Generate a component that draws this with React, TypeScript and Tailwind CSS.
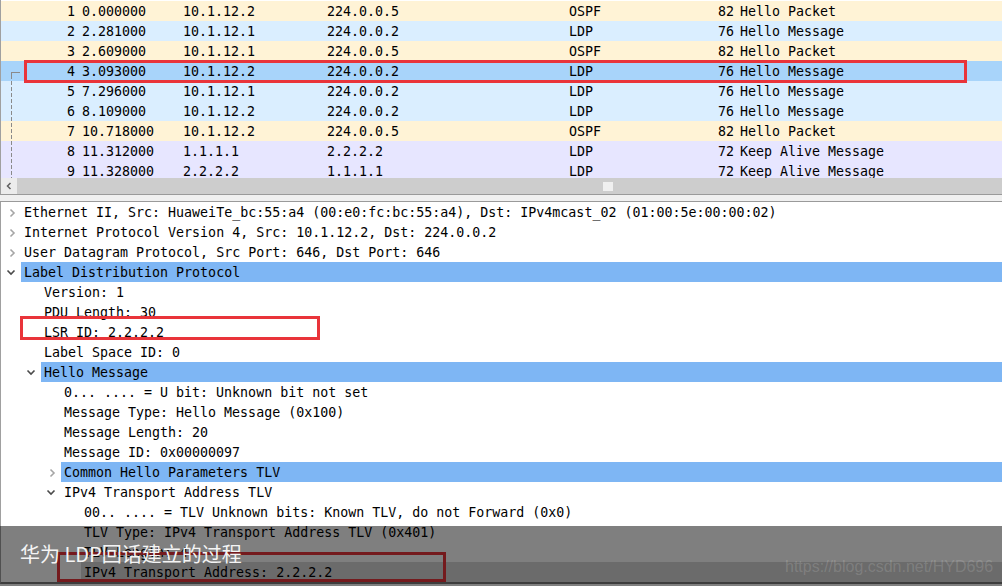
import React from "react";

type Packet = {
  no: number;
  time: string;
  src: string;
  dst: string;
  proto: string;
  len: number;
  info: string;
  bg: string;
};

const packets: Packet[] = [
  { no: 1, time: "0.000000", src: "10.1.12.2", dst: "224.0.0.5", proto: "OSPF", len: 82, info: "Hello Packet", bg: "bg-[#fff3d6]" },
  { no: 2, time: "2.281000", src: "10.1.12.1", dst: "224.0.0.2", proto: "LDP", len: 76, info: "Hello Message", bg: "bg-[#daeeff]" },
  { no: 3, time: "2.609000", src: "10.1.12.1", dst: "224.0.0.5", proto: "OSPF", len: 82, info: "Hello Packet", bg: "bg-[#fff3d6]" },
  { no: 4, time: "3.093000", src: "10.1.12.2", dst: "224.0.0.2", proto: "LDP", len: 76, info: "Hello Message", bg: "bg-[#a8d4fa]" },
  { no: 5, time: "7.296000", src: "10.1.12.1", dst: "224.0.0.2", proto: "LDP", len: 76, info: "Hello Message", bg: "bg-[#daeeff]" },
  { no: 6, time: "8.109000", src: "10.1.12.2", dst: "224.0.0.2", proto: "LDP", len: 76, info: "Hello Message", bg: "bg-[#daeeff]" },
  { no: 7, time: "10.718000", src: "10.1.12.2", dst: "224.0.0.5", proto: "OSPF", len: 82, info: "Hello Packet", bg: "bg-[#fff3d6]" },
  { no: 8, time: "11.312000", src: "1.1.1.1", dst: "2.2.2.2", proto: "LDP", len: 72, info: "Keep Alive Message", bg: "bg-[#e7e6ff]" },
  { no: 9, time: "11.328000", src: "2.2.2.2", dst: "1.1.1.1", proto: "LDP", len: 72, info: "Keep Alive Message", bg: "bg-[#e7e6ff]" },
];

type Node = {
  level: number;
  text: string;
  arrow?: "open" | "closed";
  hl?: "blue" | "gray";
};

const tree: Node[] = [
  { level: 0, arrow: "closed", text: "Ethernet II, Src: HuaweiTe_bc:55:a4 (00:e0:fc:bc:55:a4), Dst: IPv4mcast_02 (01:00:5e:00:00:02)" },
  { level: 0, arrow: "closed", text: "Internet Protocol Version 4, Src: 10.1.12.2, Dst: 224.0.0.2" },
  { level: 0, arrow: "closed", text: "User Datagram Protocol, Src Port: 646, Dst Port: 646" },
  { level: 0, arrow: "open", hl: "blue", text: "Label Distribution Protocol" },
  { level: 1, text: "Version: 1" },
  { level: 1, text: "PDU Length: 30" },
  { level: 1, text: "LSR ID: 2.2.2.2" },
  { level: 1, text: "Label Space ID: 0" },
  { level: 1, arrow: "open", hl: "blue", text: "Hello Message" },
  { level: 2, text: "0... .... = U bit: Unknown bit not set" },
  { level: 2, text: "Message Type: Hello Message (0x100)" },
  { level: 2, text: "Message Length: 20" },
  { level: 2, text: "Message ID: 0x00000097" },
  { level: 2, arrow: "closed", hl: "blue", text: "Common Hello Parameters TLV" },
  { level: 2, arrow: "open", text: "IPv4 Transport Address TLV" },
  { level: 3, text: "00.. .... = TLV Unknown bits: Known TLV, do not Forward (0x0)" },
  { level: 3, text: "TLV Type: IPv4 Transport Address TLV (0x401)" },
  { level: 3, text: "TLV Length: 4" },
  { level: 3, hl: "gray", text: "IPv4 Transport Address: 2.2.2.2" },
];

function Chevron({ kind }: { kind: "open" | "closed" }) {
  if (kind === "closed")
    return (
      <svg width="7" height="10" viewBox="0 0 7 10" className="ml-[2px]">
        <path d="M1.5 1.5 L5 5 L1.5 8.5" stroke="#a6a6a6" strokeWidth="1.6" fill="none" />
      </svg>
    );
  return (
    <svg width="10" height="7" viewBox="0 0 10 7">
      <path d="M1.5 1.5 L5 5 L8.5 1.5" stroke="#4a4a4a" strokeWidth="1.6" fill="none" />
    </svg>
  );
}

export default function App() {
  return (
    <div className="relative w-[1002px] h-[586px] overflow-hidden bg-white text-black font-['DejaVu_Sans_Mono',monospace] text-[13.3px]">
      {/* packet list */}
      <div className="relative h-[178px] overflow-hidden border-l border-[#a0a0a0]">
        <div className="h-[1px] bg-white" />
        {packets.map((p) => (
          <div key={p.no} className={`flex h-[20px] pt-[2px] leading-[18px] whitespace-pre ${p.bg}`}>
            <span className="w-[76px] shrink-0 pr-[2px] text-right">{p.no}</span>
            <span className="w-[102px] shrink-0 pl-[5px]">{p.time}</span>
            <span className="w-[144px] shrink-0 pl-[4px]">{p.src}</span>
            <span className="w-[242px] shrink-0 pl-[4px]">{p.dst}</span>
            <span className="w-[100px] shrink-0 pl-[4px]">{p.proto}</span>
            <span className="w-[72px] shrink-0 pr-[3px] text-right">{p.len}</span>
            <span className="pl-[3px]">{p.info}</span>
          </div>
        ))}
        <svg className="absolute left-[9px] top-[71px]" width="12" height="108" viewBox="0 0 12 108">
          <path d="M1.5 1.5 H10" stroke="#8a8a8a" strokeWidth="1" fill="none" />
          <path d="M1.5 1 V4" stroke="#8a8a8a" strokeWidth="1" fill="none" />
          <path d="M1.5 4 V108" stroke="#8a8a8a" strokeWidth="1" strokeDasharray="4 2" fill="none" />
        </svg>
      </div>

      {/* horizontal scrollbar */}
      <div className="flex h-[16px] border-l border-[#a0a0a0] bg-[#cdcdcd]">
        <div className="flex w-[16px] items-center justify-center bg-[#ececec]">
          <svg width="6" height="8" viewBox="0 0 6 8">
            <path d="M4.5 1 L1.5 4 L4.5 7" stroke="#606060" strokeWidth="1.5" fill="none" />
          </svg>
        </div>
        <div className="flex flex-1 items-center pl-[586px]">
          <div className="h-[9px] w-[10px] bg-[#f0f0f0]" />
        </div>
      </div>

      {/* splitter */}
      <div className="h-[8px] border-y border-[#9a9a9a] bg-[#f0f0f0]" />

      {/* packet details */}
      <div className="h-[382px] border-l border-[#a0a0a0] border-b-2 border-b-[#7a7a7a]">
        {tree.map((n, i) => (
          <div key={i} className="flex h-[20px]" style={{ paddingLeft: n.level * 20 }}>
            <span className="flex w-[20px] shrink-0 items-center justify-center pt-[1px]">
              {n.arrow && <Chevron kind={n.arrow} />}
            </span>
            <span
              className={`flex-1 pl-[3px] pt-[2px] leading-[18px] whitespace-pre ${
                n.hl === "blue" ? "bg-[#7eb6f4]" : n.hl === "gray" ? "bg-[#d6d6d6]" : ""
              }`}
            >
              {n.text}
            </span>
          </div>
        ))}
      </div>

      {/* annotations */}
      <div className="absolute left-[24px] top-[60px] h-[23px] w-[943px] border-[3px] border-[#e9343a]" />
      <div className="absolute left-[20px] top-[316px] h-[24px] w-[300px] border-[3px] border-[#e9343a]" />
      <div className="absolute left-[57px] top-[552px] h-[30px] w-[389px] border-[3px] border-[#e9343a]" />

      {/* caption band */}
      <div className="absolute left-0 right-0 top-[526px] h-[60px] bg-black/50" />
      <div className="absolute left-[20px] top-[544px] text-[20px] leading-[20px] text-[#f4f4f4] font-['Noto_Sans_CJK_SC',sans-serif] whitespace-pre">
        华为 LDP回话建立的过程
      </div>
      <div className="absolute left-[785px] top-[558px] text-[16px] leading-[18px] text-white/15 font-['Liberation_Sans',Arial,sans-serif]">
        https://blog.csdn.net/HYD696
      </div>
    </div>
  );
}
